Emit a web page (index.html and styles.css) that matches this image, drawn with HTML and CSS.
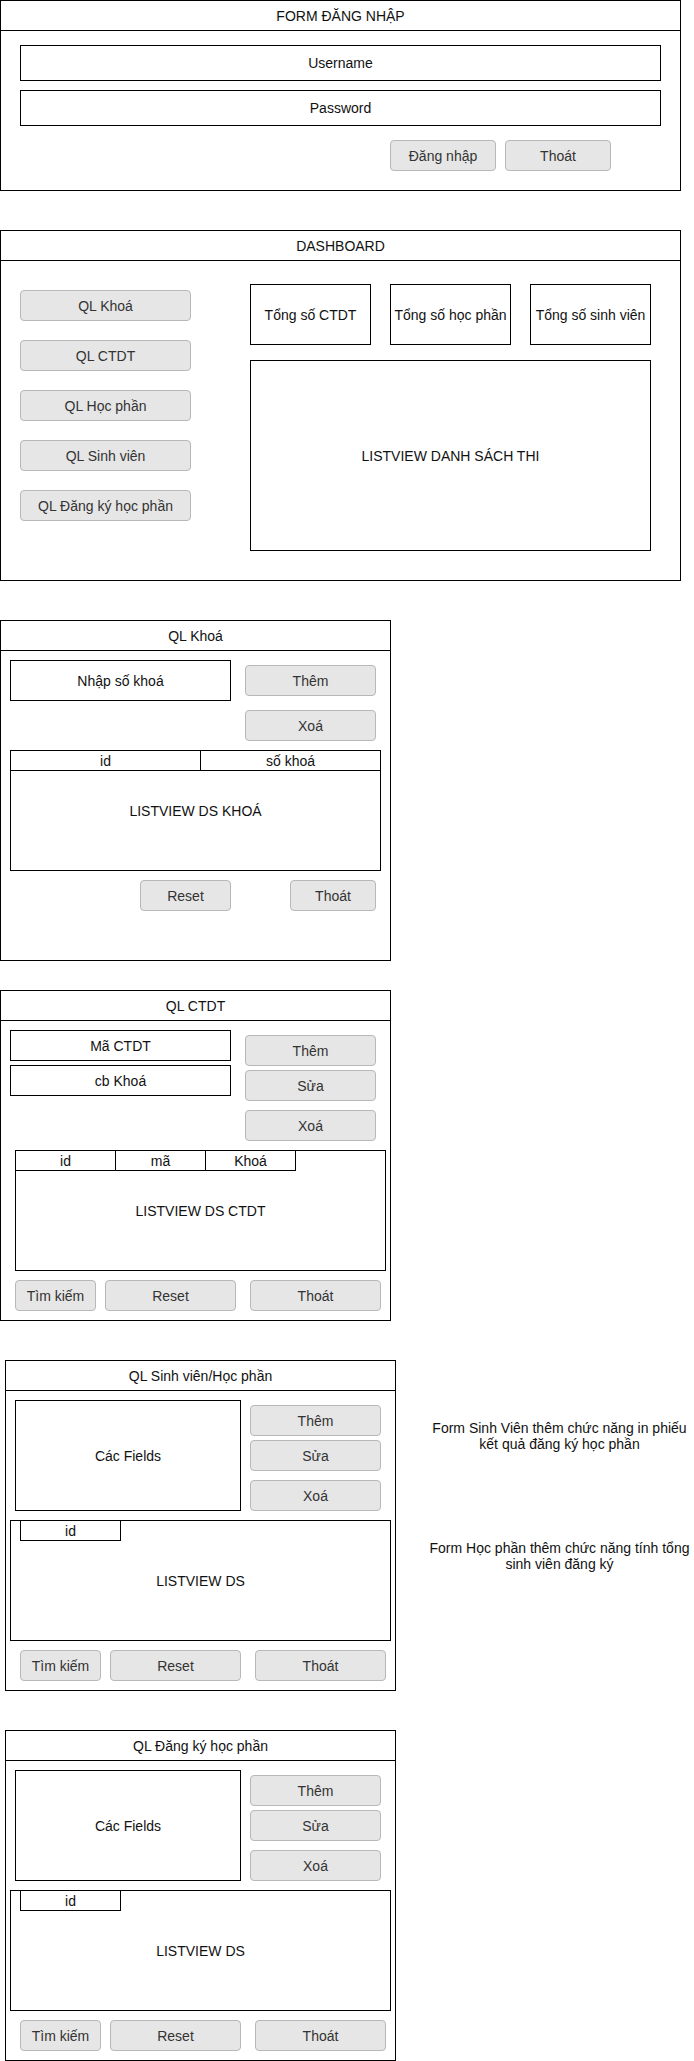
FILE: index.html
```html
<!DOCTYPE html>
<html lang="vi">
<head>
<meta charset="utf-8">
<title>Wireframes</title>
<link rel="stylesheet" href="styles.css">
</head>
<body>
<div class="page">

  <section class="win win-login">
    <div class="win-title">FORM ĐĂNG NHẬP</div>
    <div class="login-body">
      <div class="box login-input">Username</div>
      <div class="box login-input login-pass">Password</div>
      <div class="login-actions">
        <div class="btn login-btn">Đăng nhập</div>
        <div class="btn login-btn">Thoát</div>
      </div>
    </div>
  </section>

  <section class="win win-dash">
    <div class="win-title">DASHBOARD</div>
    <div class="dash-body">
      <div class="dash-menu">
        <div class="btn dash-btn">QL Khoá</div>
        <div class="btn dash-btn">QL CTDT</div>
        <div class="btn dash-btn">QL Học phần</div>
        <div class="btn dash-btn">QL Sinh viên</div>
        <div class="btn dash-btn">QL Đăng ký học phần</div>
      </div>
      <div class="dash-main">
        <div class="dash-stats">
          <div class="box stat">Tổng số CTDT</div>
          <div class="box stat">Tổng số học phần</div>
          <div class="box stat">Tổng số sinh viên</div>
        </div>
        <div class="box dash-list">LISTVIEW DANH SÁCH THI</div>
      </div>
    </div>
  </section>

  <section class="win win-khoa">
    <div class="win-title">QL Khoá</div>
    <div class="khoa-body">
      <div class="top-row">
        <div class="box khoa-input">Nhập số khoá</div>
        <div class="btn-col">
          <div class="btn side-btn">Thêm</div>
          <div class="btn side-btn khoa-xoa">Xoá</div>
        </div>
      </div>
      <div class="box list khoa-list">
        <div class="list-head khoa-head">
          <div class="col khoa-col-id">id</div>
          <div class="col khoa-col-so">số khoá</div>
        </div>
        LISTVIEW DS KHOÁ
      </div>
      <div class="bottom-row">
        <div class="btn khoa-reset">Reset</div>
        <div class="btn khoa-thoat">Thoát</div>
      </div>
    </div>
  </section>

  <section class="win win-ctdt">
    <div class="win-title">QL CTDT</div>
    <div class="ctdt-body">
      <div class="top-row">
        <div class="field-col">
          <div class="box ctdt-field">Mã CTDT</div>
          <div class="box ctdt-field ctdt-field-2">cb Khoá</div>
        </div>
        <div class="btn-col">
          <div class="btn side-btn">Thêm</div>
          <div class="btn side-btn sua">Sửa</div>
          <div class="btn side-btn xoa">Xoá</div>
        </div>
      </div>
      <div class="box list ctdt-list">
        <div class="list-head ctdt-head">
          <div class="cell cell-id">id</div>
          <div class="cell cell-ma">mã</div>
          <div class="cell cell-khoa">Khoá</div>
        </div>
        LISTVIEW DS CTDT
      </div>
      <div class="bottom-row ctdt-bottom">
        <div class="btn btn-find">Tìm kiếm</div>
        <div class="btn btn-reset">Reset</div>
        <div class="btn btn-exit">Thoát</div>
      </div>
    </div>
  </section>

  <div class="sv-row">
    <section class="win win-gen">
      <div class="win-title">QL Sinh viên/Học phần</div>
      <div class="gen-body">
        <div class="top-row gen-top">
          <div class="box gen-fields">Các Fields</div>
          <div class="btn-col gen-btns">
            <div class="btn side-btn">Thêm</div>
            <div class="btn side-btn sua">Sửa</div>
            <div class="btn side-btn xoa">Xoá</div>
          </div>
        </div>
        <div class="box list gen-list">
          <div class="cell gen-id">id</div>
          LISTVIEW DS
        </div>
        <div class="bottom-row gen-bottom">
          <div class="btn btn-find">Tìm kiếm</div>
          <div class="btn btn-reset">Reset</div>
          <div class="btn btn-exit">Thoát</div>
        </div>
      </div>
    </section>
    <div class="notes">
      <p class="note note-1">Form Sinh Viên thêm chức năng in phiếu<br>kết quả đăng ký học phần</p>
      <p class="note note-2">Form Học phần thêm chức năng tính tổng<br>sinh viên đăng ký</p>
    </div>
  </div>

  <section class="win win-gen win-dk">
    <div class="win-title">QL Đăng ký học phần</div>
    <div class="gen-body">
      <div class="top-row gen-top">
        <div class="box gen-fields">Các Fields</div>
        <div class="btn-col gen-btns">
          <div class="btn side-btn">Thêm</div>
          <div class="btn side-btn sua">Sửa</div>
          <div class="btn side-btn xoa">Xoá</div>
        </div>
      </div>
      <div class="box list gen-list">
        <div class="cell gen-id">id</div>
        LISTVIEW DS
      </div>
      <div class="bottom-row gen-bottom">
        <div class="btn btn-find">Tìm kiếm</div>
        <div class="btn btn-reset">Reset</div>
        <div class="btn btn-exit">Thoát</div>
      </div>
    </div>
  </section>

</div>
</body>
</html>
```

FILE: styles.css
```css
* { box-sizing: border-box; margin: 0; padding: 0; }

html, body { background: #fff; }

body {
  margin: 0;
  font-family: "Liberation Sans", Arial, Helvetica, sans-serif;
  font-size: 14px;
  line-height: 16px;
  color: #111;
}

.page {
  display: flex;
  flex-direction: column;
  align-items: flex-start;
  width: 694px;
}

/* generic window */
.win {
  border: 1px solid #000;
  background: #fff;
  flex: none;
}

.win-title {
  height: 30px;
  border-bottom: 1px solid #000;
  display: flex;
  align-items: center;
  justify-content: center;
  color: #111;
}

.box {
  border: 1px solid #000;
  display: flex;
  align-items: center;
  justify-content: center;
  text-align: center;
  background: #fff;
  flex: none;
}

.btn {
  height: 31px;
  border: 1px solid #b8b8b8;
  border-radius: 4px;
  background: #e6e6e6;
  color: #333;
  display: flex;
  align-items: center;
  justify-content: center;
  flex: none;
  white-space: nowrap;
}

/* ---------- login ---------- */
.win-login { width: 681px; height: 191px; }

.login-body {
  display: flex;
  flex-direction: column;
  padding: 14px 19px 0;
}

.login-input { width: 641px; height: 36px; }
.login-pass { margin-top: 9px; }

.login-actions {
  display: flex;
  gap: 9px;
  margin-top: 14px;
  padding-left: 370px;
}

.login-btn { width: 106px; }

/* ---------- dashboard ---------- */
.win-dash { width: 681px; height: 351px; margin-top: 39px; }

.dash-body {
  display: flex;
  align-items: flex-start;
  padding: 23px 0 0 19px;
}

.dash-menu {
  display: flex;
  flex-direction: column;
  gap: 19px;
  margin-top: 6px;
  width: 171px;
}

.dash-btn { width: 171px; }

.dash-main {
  margin-left: 59px;
  display: flex;
  flex-direction: column;
}

.dash-stats { display: flex; gap: 19px; }

.stat { width: 121px; height: 61px; white-space: nowrap; }

.dash-list { width: 401px; height: 191px; margin-top: 15px; }

/* ---------- shared form parts ---------- */
.top-row { display: flex; align-items: flex-start; }

.btn-col {
  display: flex;
  flex-direction: column;
  margin-left: 14px;
  margin-top: 5px;
}

.side-btn { width: 131px; }

.list { position: relative; }

.list-head {
  position: absolute;
  display: flex;
}

.cell {
  border: 1px solid #000;
  height: 21px;
  display: flex;
  align-items: center;
  justify-content: center;
  background: #fff;
}

.bottom-row { display: flex; }

/* ---------- QL Khoá ---------- */
.win-khoa { width: 391px; height: 341px; margin-top: 39px; }

.khoa-body { padding: 9px 0 0 9px; display: flex; flex-direction: column; }

.khoa-input { width: 221px; height: 41px; }

.khoa-xoa { margin-top: 14px; }

.khoa-list { width: 371px; height: 121px; margin-top: 9px; }

.khoa-head {
  top: 0;
  left: 0;
  right: 0;
  height: 20px;
  border-bottom: 1px solid #000;
}

.col { display: flex; align-items: center; justify-content: center; }

.khoa-col-id { width: 190px; border-right: 1px solid #000; }
.khoa-col-so { flex: 1; }

.khoa-reset { width: 91px; margin-left: 130px; }
.khoa-thoat { width: 86px; margin-left: 59px; }
.win-khoa .bottom-row { margin-top: 9px; }

/* ---------- QL CTDT ---------- */
.win-ctdt { width: 391px; height: 331px; margin-top: 29px; }

.ctdt-body { padding: 9px 0 0 9px; display: flex; flex-direction: column; }

.field-col { display: flex; flex-direction: column; }

.ctdt-field { width: 221px; height: 31px; }
.ctdt-field-2 { margin-top: 4px; }

.sua { margin-top: 4px; }
.xoa { margin-top: 9px; }

.ctdt-list { width: 371px; height: 121px; margin-top: 9px; margin-left: 5px; }

.ctdt-head { top: -1px; left: -1px; }

.cell-id { width: 101px; }
.cell-ma { width: 91px; margin-left: -1px; }
.cell-khoa { width: 91px; margin-left: -1px; }

.ctdt-bottom { margin-top: 9px; margin-left: 5px; }

.btn-find { width: 81px; }
.btn-reset { width: 131px; margin-left: 9px; }
.btn-exit { width: 131px; margin-left: 14px; }

/* ---------- QL Sinh viên / Đăng ký ---------- */
.sv-row {
  display: flex;
  align-items: flex-start;
  margin-top: 39px;
}

.win-gen { width: 391px; height: 331px; margin-left: 5px; }

.win-dk { margin-top: 39px; }

.gen-body { padding: 9px 0 0 4px; display: flex; flex-direction: column; }

.gen-top { margin-left: 5px; }

.gen-fields { width: 226px; height: 111px; }

.gen-btns { margin-left: 9px; }

.gen-list { width: 381px; height: 121px; margin-top: 9px; }

.gen-id {
  position: absolute;
  top: -1px;
  left: 9px;
  width: 101px;
}

.gen-bottom { margin-top: 9px; margin-left: 10px; }

/* ---------- notes ---------- */
.notes {
  margin-left: 29px;
  width: 269px;
  display: flex;
  flex-direction: column;
}

.note {
  text-align: center;
  white-space: nowrap;
  line-height: 16px;
  color: #111;
}

.note-1 { margin-top: 60px; }
.note-2 { margin-top: 88px; }
```
